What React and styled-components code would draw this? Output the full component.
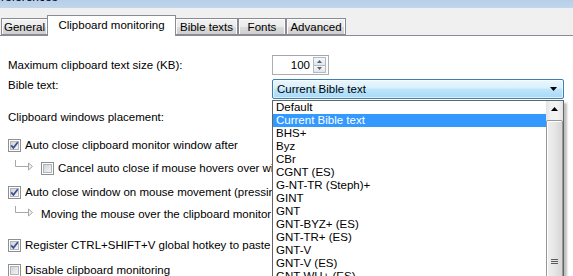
import React from 'react';
import styled, { createGlobalStyle } from 'styled-components';

const GlobalStyle = createGlobalStyle`
  html, body {
    margin: 0;
    padding: 0;
    background: #ffffff;
  }
  body {
    font-family: "Liberation Sans", Arial, sans-serif;
    font-size: 11.5px;
    color: #000;
  }
`;

const Window = styled.div`
  position: relative;
  width: 573px;
  height: 276px;
  overflow: hidden;
  background: #fff;
`;

const TitleBar = styled.div`
  height: 8px;
  overflow: hidden;
  background: linear-gradient(#b6cfe9, #c1d6ec);
`;

const TitleText = styled.div`
  margin-top: -10px;
  margin-left: -7px;
  font-size: 12px;
  line-height: 15px;
  color: #000;
`;

const TabStrip = styled.div`
  display: flex;
  align-items: flex-end;
  height: 27px;
  padding-left: 1px;
  background: #f0f0f0;
  border-bottom: 1px solid #898c95;
`;

const Tab = styled.div`
  box-sizing: border-box;
  width: ${p => p.$w}px;
  height: ${p => (p.$active ? 21 : 17)}px;
  margin-bottom: ${p => (p.$active ? -1 : 0)}px;
  margin-left: ${p => p.$ml || 0}px;
  display: flex;
  align-items: center;
  justify-content: center;
  padding-bottom: ${p => (p.$active ? 3 : 0)}px;
  border: 1px solid #898c95;
  border-bottom: ${p => (p.$active ? 'none' : '1px solid #898c95')};
  background: ${p => (p.$active
    ? '#ffffff'
    : 'linear-gradient(#f2f2f2 0%, #ebebeb 50%, #dddddd 51%, #cfcfcf 100%)')};
  box-shadow: ${p => (p.$active ? 'none' : 'inset 1px 1px 0 #fbfbfb, inset -1px 0 0 #fbfbfb')};
  z-index: ${p => (p.$active ? 2 : 1)};
  white-space: nowrap;
`;

const Content = styled.div`
  display: flex;
  flex-direction: column;
  padding-left: 8px;
`;

const Row = styled.div`
  display: flex;
  align-items: center;
  height: ${p => p.$h || 16}px;
  margin-top: ${p => p.$mt || 0}px;
  white-space: nowrap;
  ${p => p.$clip && 'width: 264px; overflow: hidden;'}
`;

const Label = styled.span`
  width: 264px;
  flex-shrink: 0;
  align-self: ${p => (p.$top ? 'flex-start' : 'center')};
`;

const Spinner = styled.div`
  box-sizing: border-box;
  width: 57px;
  height: 20px;
  display: flex;
  align-items: center;
  justify-content: flex-end;
  gap: 3px;
  padding-right: 2px;
  border: 1px solid #abadb3;
  border-top-color: #a3a6ad;
`;

const SpinButtons = styled.div`
  display: flex;
  flex-direction: column;
  width: 13px;
  height: 16px;
`;

const SpinButton = styled.div`
  flex: 1;
  display: flex;
  align-items: center;
  justify-content: center;
  box-sizing: border-box;
  border: 1px solid #b4b8bf;
  background: linear-gradient(#f7f7f7, #e3e5e8);
  & + & {
    margin-top: -1px;
  }
`;

const Combo = styled.div`
  box-sizing: border-box;
  width: 292px;
  height: 20px;
  display: flex;
  align-items: center;
  justify-content: space-between;
  padding: 0 6px 0 4px;
  border: 1px solid #3c7fb1;
  border-radius: 2px;
  background: linear-gradient(#eaf6fd 0%, #d9f0fc 45%, #bee6fd 50%, #a7d9f5 100%);
  box-shadow: inset 0 0 0 1px rgba(255, 255, 255, 0.6);
`;

const Section = styled.div`
  margin-top: ${p => p.$mt || 0}px;
  height: 16px;
  line-height: 16px;
`;

const CheckText = styled.span`
  margin-left: ${p => (p.$plain ? 0 : 4)}px;
  min-width: 0;
  overflow: hidden;
`;

const Connector = styled.svg`
  flex-shrink: 0;
  overflow: visible;
`;

const DropList = styled.div`
  position: absolute;
  left: 272px;
  top: 100px;
  width: 292px;
  height: 190px;
  box-sizing: border-box;
  display: flex;
  border: 1px solid #646464;
  background: #fff;
  box-shadow: 3px 3px 2px rgba(0, 0, 0, 0.25);
  z-index: 5;
`;

const Items = styled.div`
  flex: 1;
  display: flex;
  flex-direction: column;
`;

const Item = styled.div`
  height: 13px;
  line-height: 13px;
  padding-left: 3px;
  white-space: nowrap;
  color: ${p => (p.$selected ? '#fff' : '#000')};
  background: ${p => (p.$selected ? '#3399ff' : 'transparent')};
`;

const ScrollBar = styled.div`
  width: 17px;
  display: flex;
  flex-direction: column;
  background: linear-gradient(90deg, #e3e3e3, #f3f3f3 30%, #f3f3f3 70%, #e3e3e3);
`;

const ScrollArrow = styled.div`
  height: 17px;
  display: flex;
  align-items: center;
  justify-content: center;
`;

const Thumb = styled.div`
  box-sizing: border-box;
  margin-top: 2px;
  height: 170px;
  display: flex;
  align-items: flex-start;
  justify-content: center;
  border: 1px solid #979797;
  border-radius: 2px;
  background: linear-gradient(90deg, #f0f0f0, #e6e6e6 50%, #d6d6d6);
  box-shadow: inset 1px 1px 0 #fff;
`;

const Grip = styled.svg`
  margin-top: 138px;
`;

const Checkbox = ({ checked }) => (
  <svg width="13" height="13" viewBox="0 0 13 13" style={{ flexShrink: 0 }}>
    <defs>
      <linearGradient id="cbInner" x1="0" y1="0" x2="1" y2="1">
        <stop offset="0" stopColor="#cdd1d7" />
        <stop offset="1" stopColor="#f7f7f7" />
      </linearGradient>
    </defs>
    <rect x="0.5" y="0.5" width="12" height="12" fill="#fff" stroke="#8e8f8f" />
    <rect x="2.5" y="2.5" width="8" height="8" fill="url(#cbInner)" stroke="#b2b5ba" strokeWidth="1" />
    {checked && (
      <path d="M3.2 6.4 L5.4 8.9 L9.8 3.3" fill="none" stroke="#3b4f91" strokeWidth="1.7" />
    )}
  </svg>
);

const Arrow = () => (
  <Connector width="33" height="16" viewBox="0 0 33 16">
    <path d="M7.5 -8 V6.5 H20" fill="none" stroke="#a7a7a7" strokeWidth="1" />
    <path d="M20.5 3 L24.5 6.5 L20.5 10 Z" fill="#f2f2f2" stroke="#a7a7a7" strokeWidth="1" />
  </Connector>
);

const bibles = [
  'Default', 'Current Bible text', 'BHS+', 'Byz', 'CBr', 'CGNT (ES)', 'G-NT-TR (Steph)+',
  'GINT', 'GNT', 'GNT-BYZ+ (ES)', 'GNT-TR+ (ES)', 'GNT-V', 'GNT-V (ES)', 'GNT-WH+ (ES)',
];

const tabs = [
  { name: 'General', w: 47 },
  { name: 'Clipboard monitoring', w: 129, active: true, ml: -1 },
  { name: 'Bible texts', w: 63, ml: -1 },
  { name: 'Fonts', w: 48 },
  { name: 'Advanced', w: 60 },
];

const App = () => (
  <Window>
    <GlobalStyle />
    <TitleBar>
      <TitleText>Preferences</TitleText>
    </TitleBar>
    <TabStrip>
      {tabs.map(t => (
        <Tab key={t.name} $w={t.w} $active={t.active} $ml={t.ml}>{t.name}</Tab>
      ))}
    </TabStrip>
    <Content>
      <Row $h={20} $mt={19}>
        <Label>Maximum clipboard text size (KB):</Label>
        <Spinner>
          <span>100</span>
          <SpinButtons>
            <SpinButton>
              <svg width="5" height="3" viewBox="0 0 5 3"><path d="M0 3 L2.5 0 L5 3 Z" fill="#4d6185" /></svg>
            </SpinButton>
            <SpinButton>
              <svg width="5" height="3" viewBox="0 0 5 3"><path d="M0 0 L2.5 3 L5 0 Z" fill="#4d6185" /></svg>
            </SpinButton>
          </SpinButtons>
        </Spinner>
      </Row>
      <Row $h={20} $mt={4}>
        <Label $top>Bible text:</Label>
        <Combo>
          <span>Current Bible text</span>
          <svg width="7" height="4" viewBox="0 0 7 4"><path d="M0 0 H7 L3.5 4 Z" fill="#000" /></svg>
        </Combo>
      </Row>
      <Section $mt={10}>Clipboard windows placement:</Section>
      <Row $mt={12} $clip>
        <Checkbox checked />
        <CheckText>Auto close clipboard monitor window after</CheckText>
      </Row>
      <Row $mt={7} $clip>
        <Arrow />
        <Checkbox />
        <CheckText>Cancel auto close if mouse hovers over window</CheckText>
      </Row>
      <Row $mt={8} $clip>
        <Checkbox checked />
        <CheckText>Auto close window on mouse movement (pressing CTRL)</CheckText>
      </Row>
      <Row $mt={6} $clip>
        <Arrow />
        <CheckText $plain>Moving the mouse over the clipboard monitor window</CheckText>
      </Row>
      <Row $mt={15} $clip>
        <Checkbox checked />
        <CheckText>Register CTRL+SHIFT+V global hotkey to paste bible text</CheckText>
      </Row>
      <Row $mt={9} $clip>
        <Checkbox />
        <CheckText>Disable clipboard monitoring</CheckText>
      </Row>
    </Content>
    <DropList>
      <Items>
        {bibles.map((b, i) => (
          <Item key={b} $selected={i === 1}>{b}</Item>
        ))}
      </Items>
      <ScrollBar>
        <ScrollArrow>
          <svg width="7" height="4" viewBox="0 0 7 4"><path d="M0 4 L3.5 0 L7 4 Z" fill="#000" /></svg>
        </ScrollArrow>
        <Thumb>
          <Grip width="7" height="6" viewBox="0 0 7 6">
            <path d="M0 0.5 H7 M0 2.5 H7 M0 4.5 H7" stroke="#5a5a5a" strokeWidth="1" />
          </Grip>
        </Thumb>
      </ScrollBar>
    </DropList>
  </Window>
);

export default App;
